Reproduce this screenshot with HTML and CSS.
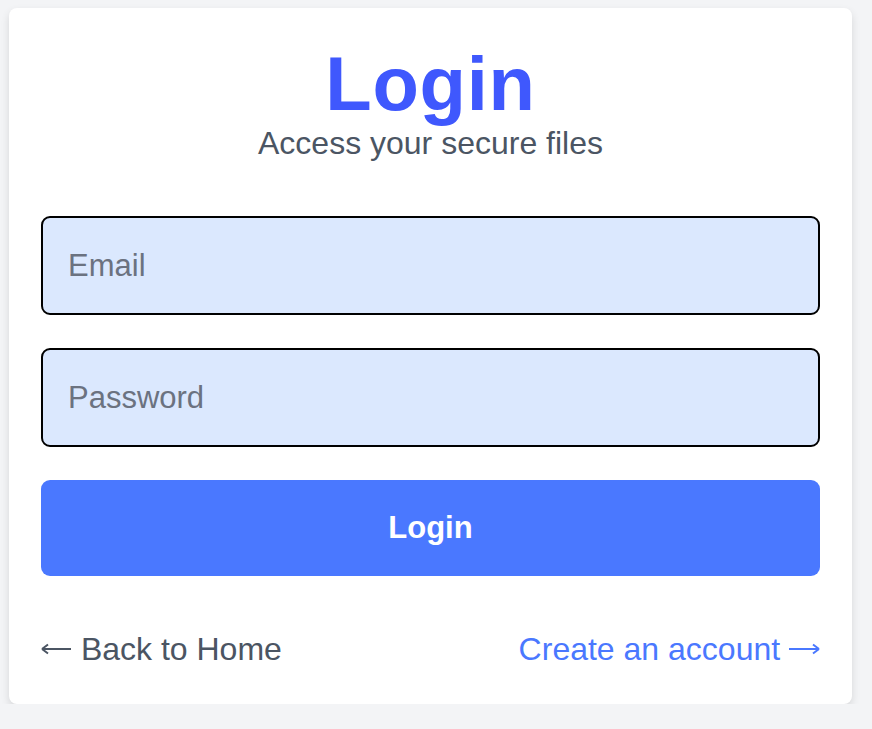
FILE: index.html
```html
<!DOCTYPE html>
<html lang="en">
<head>
<meta charset="utf-8">
<title>Login</title>
<link rel="stylesheet" href="styles.css">
</head>
<body>
<main class="card">
  <header class="head">
    <h1 class="title">Login</h1>
    <p class="subtitle">Access your secure files</p>
  </header>
  <form class="form">
    <input class="field" type="email" placeholder="Email">
    <input class="field" type="password" placeholder="Password">
    <button class="btn" type="button">Login</button>
  </form>
  <nav class="links">
    <a class="link back" href="#"><svg class="arrow" width="31" height="12" viewBox="0 0 31 12" aria-hidden="true"><path d="M1 6H30M1 6L7 1.5M1 6L7 10.5" fill="none" stroke="currentColor" stroke-width="2"/></svg> Back to Home</a>
    <a class="link create" href="#">Create an account <svg class="arrow" width="31" height="12" viewBox="0 0 31 12" aria-hidden="true"><path d="M0 6H30M30 6L24 1.5M30 6L24 10.5" fill="none" stroke="currentColor" stroke-width="2"/></svg></a>
  </nav>
</main>
</body>
</html>
```

FILE: styles.css
```css
html, body {
  margin: 0;
  background: #f3f4f6;
  font-family: "Liberation Sans", Arial, sans-serif;
}
body {
  padding: 8px 0 0 9px;
}
.card {
  width: 843px;
  height: 696px;
  box-sizing: border-box;
  background: #fff;
  border-radius: 8px;
  box-shadow: 0 4px 8px rgba(0, 0, 0, 0.12);
  padding: 39px 32px 0;
}
.head {
  text-align: center;
}
.title {
  margin: 0;
  font-size: 76px;
  line-height: 74px;
  font-weight: 700;
  letter-spacing: 0.7px;
  color: #3f58fd;
}
.subtitle {
  margin: 4px 0 0;
  font-size: 32px;
  line-height: 36px;
  color: #4b5563;
}
.form {
  display: flex;
  flex-direction: column;
  gap: 33px;
  margin-top: 55px;
}
.field {
  height: 99px;
  box-sizing: border-box;
  border: 2px solid #000;
  border-radius: 9px;
  background: #dbe8fe;
  padding: 0 25px;
  font-family: inherit;
  font-size: 31px;
  color: #111;
  outline: none;
}
.field::placeholder {
  color: #6b7280;
}
.btn {
  height: 96px;
  border: 0;
  border-radius: 9px;
  background: #4a78ff;
  color: #fff;
  font-family: inherit;
  font-size: 31px;
  font-weight: 700;
}
.links {
  display: flex;
  justify-content: space-between;
  margin-top: 55px;
}
.link {
  font-size: 32px;
  text-decoration: none;
}
.arrow {
  vertical-align: 0.15em;
}
.back {
  color: #4b5563;
}
.create {
  color: #4a78ff;
}
```
